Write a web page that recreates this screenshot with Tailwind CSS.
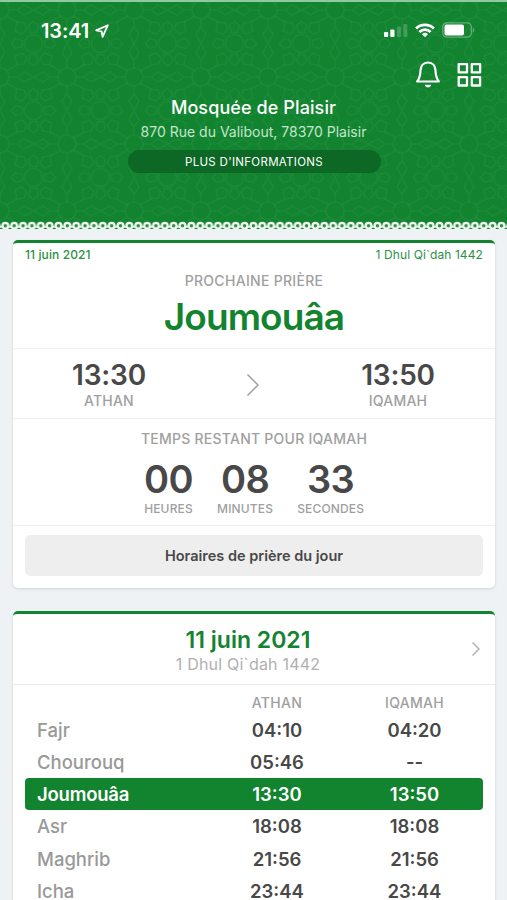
<!DOCTYPE html>
<html lang="fr">

<head>
  <meta charset="UTF-8">
  <meta name="viewport" content="width=device-width, initial-scale=1.0">
  <title>Mosquée de Plaisir</title>
  <script src="https://cdn.jsdelivr.net/npm/@tailwindcss/browser@4"></script>
</head>

<body class="bg-[#eef2f5] font-['Inter',sans-serif] text-[#484848] h-[900px] overflow-hidden">
  <!-- Header -->
  <header class="relative h-[231px] border-t-2 border-[#93c9a0] bg-[#12832f] text-white">
    <svg class="absolute inset-0 w-full h-[229px]" fill="none">
      <defs>
        <pattern id="zellige" width="67" height="67" patternUnits="userSpaceOnUse" x="0" y="8">
          <g stroke="#2b9447" stroke-opacity=".36" stroke-width="1.500">
            <circle cx="0" cy="0" r="9" /><circle cx="67" cy="0" r="9" /><circle cx="0" cy="67" r="9" /><circle cx="67" cy="67" r="9" />
            <circle cx="33.5" cy="33.5" r="9" />
            <path d="M33.5 11.5l5 4-2 7h-6l-2-7zM33.5 55.5l5-4-2-7h-6l-2 7zM11.5 33.5l4 5 7-2v-6l-7-2zM55.5 33.5l-4 5-7-2v-6l7-2z" />
            <path d="M17 12l7 1 3 6-5 5-7-3zM50 12l-7 1-3 6 5 5 7-3zM17 55l7-1 3-6-5-5-7 3zM50 55l-7-1-3-6 5-5 7 3z" />
            <path d="M9 0h8l7 5 9.500-5 9.500 5 7-5h8M9 67h8l7-5 9.500 5 9.500-5 7 5h8M0 9v8l5 7-5 9.500 5 9.500-5 7v8M67 9v8l-5 7 5 9.500-5 9.500 5 7v8M6 6l11 6M61 6l-11 6M6 61l11-6M61 61l-11-6" />
          </g>
        </pattern>
        <pattern id="lace" width="8.86" height="9" patternUnits="userSpaceOnUse" x="0.9" y="219">
          <path d="M0 5.800h8.860" stroke="#e6f3ea" stroke-width="1.800" />
          <circle cx="4.430" cy="4.700" r="2.900" fill="#2f8f48" stroke="#f1f8f2" stroke-width="2.300" />
        </pattern>
      </defs>
      <rect width="507" height="219" fill="url(#zellige)" />
      <rect y="219" width="507" height="9" fill="url(#lace)" />
    </svg>
    <div class="absolute inset-x-0 bottom-0 h-[2px] bg-[#eef2f5]"></div>

    <!-- Status bar -->
    <div class="relative flex justify-between items-center h-[28px] mt-[14px] pl-[41px] pr-[32px]">
      <div class="flex items-center gap-[6px] mt-px">
        <span class="text-[20px] font-semibold tracking-[-0.1px]">13:41</span>
        <svg width="14" height="14" viewBox="0 0 14 14" fill="none" stroke="white" stroke-width="1.800" stroke-linejoin="round">
          <path d="M12.800 1.200L1.200 6.400l5.400 1 1 5.400z" />
        </svg>
      </div>
      <div class="flex items-center">
        <svg width="24" height="15" viewBox="0 0 24 15" fill="white">
          <rect x="0" y="9" width="4.200" height="5" rx="1" />
          <rect x="6.300" y="6.500" width="4.200" height="7.500" rx="1" />
          <rect x="13" y="3.500" width="4" height="10.500" rx="1" fill-opacity=".2" />
          <rect x="19.300" y="1" width="4" height="13" rx="1" fill-opacity=".2" />
        </svg>
        <svg class="ml-[7px]" width="20" height="15" viewBox="0 0 20 15" fill="none" stroke="white" stroke-width="2.700">
          <path d="M1.100 5.500a12.700 12.700 0 0 1 17.800 0M4.400 9a8 8 0 0 1 11.200 0" />
          <path d="M10 14.300l-3-3a4.300 4.300 0 0 1 6 0z" fill="white" stroke="none" />
        </svg>
        <svg class="ml-[7px]" width="33" height="16" viewBox="0 0 33 16">
          <rect x=".8" y=".8" width="28.500" height="14.400" rx="4" fill="none" stroke="white" stroke-opacity=".35" stroke-width="1.200" />
          <rect x="2.500" y="2.500" width="19.500" height="11" rx="2" fill="white" />
          <path d="M30.800 5.500c2 .8 2 4.200 0 5z" fill="white" fill-opacity=".35" />
        </svg>
      </div>
    </div>

    <!-- Actions -->
    <div class="relative flex justify-end gap-[17px] h-[28px] mt-[16px] pr-[25px]">
      <svg width="24" height="28" viewBox="0 0 24 28" fill="none" stroke="white" stroke-width="2.200" stroke-linejoin="round">
        <path d="M12 2.500c-4.500 0-7.300 3.500-7.500 8-.2 5.500-1 8-3.300 11h21.600c-2.300-3-3.100-5.500-3.300-11-.2-4.500-3-8-7.500-8z" />
        <path d="M8.700 24.800c.7 3.500 5.900 3.500 6.600 0z" fill="white" stroke="none" />
      </svg>
      <svg width="25" height="28" viewBox="0 0 25 28" fill="none" stroke="white" stroke-width="2.300" stroke-linejoin="round">
        <path d="M1.700 4.100h8.300v8.300H1.700zM14.800 4.100h8.300v8.300h-8.300zM1.700 17.200h8.300v8.300H1.700zM14.800 17.200h8.300v8.300h-8.300z" />
      </svg>
    </div>

    <div class="relative flex flex-col items-center mt-[8px]">
      <h1 class="text-[18px] leading-[24px] font-medium tracking-[0.1px]">Mosquée de Plaisir</h1>
      <p class="text-[14px] leading-[20px] mt-[2px] text-[#c3e6cc]">870 Rue du Valibout, 78370 Plaisir</p>
      <button class="w-[253px] h-[23px] mt-[8px] pt-[2px] ml-px rounded-full bg-[#0c6824] text-[11.500px] tracking-[0.3px]">PLUS D'INFORMATIONS</button>
    </div>
  </header>

  <main class="pl-[13px] pt-[9px] pr-[12px]">
    <!-- Next prayer -->
    <section class="h-[348px] bg-white rounded-[5px] border-t-3 border-[#12832f] shadow-[0_1px_3px_rgba(0,0,0,0.13)]">
      <div class="flex justify-between px-[12px] pt-[4px] pb-px text-[12px] leading-[16px] text-[#2b9145]">
        <span class="font-medium tracking-[0.1px]">11 juin 2021</span>
        <span class="tracking-[0.1px]">1 Dhul Qi`dah 1442</span>
      </div>
      <div class="h-[85px] pt-[8px] text-center border-b border-[#eeeff0]">
        <h2 class="text-[14px] leading-[18px] font-medium tracking-[0.3px] text-[#a0a0a0]">PROCHAINE PRIÈRE</h2>
        <p class="text-[37px] leading-[44px] mt-[5px] font-semibold tracking-[-0.9px] text-[#12832f]">Joumouâa</p>
      </div>
      <div class="flex justify-between items-center h-[70px] pt-[2px] border-b border-[#eeeff0] text-center">
        <div class="w-[192px]">
          <p class="text-[28px] leading-[32px] font-semibold tracking-[-0.2px]">13:30</p>
          <p class="text-[14px] leading-[18px] mt-px font-medium tracking-[0.2px] text-[#a0a0a0]">ATHAN</p>
        </div>
        <svg width="14" height="24" viewBox="0 0 14 24" fill="none" stroke="#a0a0a0" stroke-width="1.500">
          <path d="M1.500 1.500L12 12 1.500 22.500" />
        </svg>
        <div class="w-[194px]">
          <p class="text-[28px] leading-[32px] font-semibold tracking-[-0.2px]">13:50</p>
          <p class="text-[14px] leading-[18px] mt-px font-medium tracking-[0.2px] text-[#a0a0a0]">IQAMAH</p>
        </div>
      </div>
      <div class="h-[107px] pt-[11px] border-b border-[#eeeff0] text-center">
        <h3 class="text-[14px] leading-[18px] font-medium tracking-[0.25px] text-[#a0a0a0]">TEMPS RESTANT POUR IQAMAH</h3>
        <div class="flex justify-center gap-[24px] mt-[9px] text-[12px] leading-[16px] font-medium tracking-[0.15px] text-[#a0a0a0]">
          <div>
            <p class="text-[38px] leading-[44px] font-semibold tracking-[-0.5px] text-[#484848]">00</p>
            <p>HEURES</p>
          </div>
          <div>
            <p class="text-[38px] leading-[44px] font-semibold tracking-[-0.5px] text-[#484848]">08</p>
            <p>MINUTES</p>
          </div>
          <div>
            <p class="text-[38px] leading-[44px] font-semibold tracking-[-0.5px] text-[#484848]">33</p>
            <p>SECONDES</p>
          </div>
        </div>
      </div>
      <div class="px-[12px] pt-[9px]">
        <button class="w-full h-[41px] rounded-[5px] bg-[#eee] text-[14.500px] font-semibold">Horaires de prière du jour</button>
      </div>
    </section>

    <!-- Day schedule -->
    <section class="h-[310px] mt-[23px] bg-white rounded-[5px] border-t-3 border-[#12832f] shadow-[0_1px_3px_rgba(0,0,0,0.13)]">
      <div class="grid grid-cols-[1fr_auto_1fr] items-center h-[71px] pt-[3px] px-[14px] border-b border-[#e9eaeb] text-center">
        <span></span>
        <div class="ml-[-12px]">
          <h2 class="text-[23px] leading-[26px] font-semibold tracking-[0px] text-[#12832f]">11 juin 2021</h2>
          <p class="text-[16px] leading-[22px] tracking-[0.2px] text-[#b0b0b0]">1 Dhul Qi`dah 1442</p>
        </div>
        <svg class="justify-self-end mb-[3px]" width="10" height="16" viewBox="0 0 10 16" fill="none" stroke="#b5b5b5" stroke-width="1.500">
          <path d="M1.500 1.500L8 8l-6.500 6.500" />
        </svg>
      </div>

      <div class="px-[12px] pt-[7px] text-[18.500px] leading-[32px] font-semibold">
        <div class="grid grid-cols-[183px_138px_137px] h-[21.5px] leading-[22px] text-center text-[14px] font-medium tracking-[0.3px] text-[#a0a0a0]">
          <span></span><span>ATHAN</span><span>IQAMAH</span>
        </div>
        <div class="grid grid-cols-[183px_138px_137px] h-[32.25px] text-center">
          <span class="pl-[12px] text-left font-medium text-[#999]">Fajr</span><span>04:10</span><span>04:20</span>
        </div>
        <div class="grid grid-cols-[183px_138px_137px] h-[32.25px] text-center">
          <span class="pl-[12px] text-left font-medium text-[#999]">Chourouq</span><span>05:46</span><span>--</span>
        </div>
        <div class="grid grid-cols-[183px_138px_137px] h-[32.25px] text-center rounded-[4px] bg-[#12832f] text-white">
          <span class="pl-[12px] text-left tracking-[-0.2px]">Joumouâa</span><span>13:30</span><span>13:50</span>
        </div>
        <div class="grid grid-cols-[183px_138px_137px] h-[32.25px] text-center">
          <span class="pl-[12px] text-left font-medium text-[#999]">Asr</span><span>18:08</span><span>18:08</span>
        </div>
        <div class="grid grid-cols-[183px_138px_137px] h-[32.25px] text-center">
          <span class="pl-[12px] text-left font-medium text-[#999]">Maghrib</span><span>21:56</span><span>21:56</span>
        </div>
        <div class="grid grid-cols-[183px_138px_137px] h-[32.25px] text-center">
          <span class="pl-[12px] text-left font-medium text-[#999]">Icha</span><span>23:44</span><span>23:44</span>
        </div>
      </div>
    </section>
  </main>
</body>

</html>
